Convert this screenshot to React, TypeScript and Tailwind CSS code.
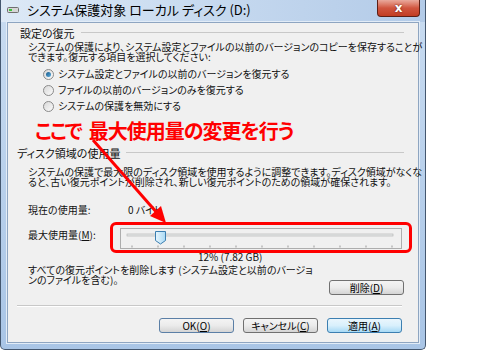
import React from "react";

const jp = "font-['Noto_Sans_CJK_JP','Noto_Sans',sans-serif] [font-feature-settings:'palt']";

function Radio({ checked }: { checked?: boolean }) {
  return (
    <span className="w-[11px] h-[11px] rounded-full border border-[#8a8a8a] bg-gradient-to-br from-[#d8d8d8] to-[#fbfbfb] flex items-center justify-center shrink-0">
      {checked && (
        <span className="w-[5px] h-[5px] rounded-full bg-gradient-to-br from-[#1a5a8a] to-[#5aaee0]" />
      )}
    </span>
  );
}

function WinButton({
  label,
  hot,
  primary,
}: {
  label: React.ReactNode;
  hot?: boolean;
  primary?: boolean;
}) {
  return (
    <div
      className={`w-[75px] h-[15px] rounded-[3px] border flex items-center justify-center text-[10px] leading-[10px] text-black ${
        hot
          ? "border-[#3c7fb1] bg-gradient-to-b from-[#eaf6fd] via-[#d9f0fc] to-[#a7d9f5]"
          : primary
          ? "border-[#5b7fa6] bg-gradient-to-b from-[#f4f4f4] via-[#ebebeb] to-[#d4d4d4]"
          : "border-[#707070] bg-gradient-to-b from-[#f4f4f4] via-[#ebebeb] to-[#d4d4d4]"
      }`}
    >
      {label}
    </div>
  );
}

function GroupHeading({ text, indent }: { text: string; indent: string }) {
  return (
    <div className={`flex items-center gap-[6px] pr-[14px] ${indent}`}>
      <span className="text-[11px] leading-[12px] whitespace-nowrap">{text}</span>
      <span className="flex-1 h-[2px] border-t border-[#c8c8c8] border-b-white" />
    </div>
  );
}

function Slider() {
  const ticks = Array.from({ length: 11 }, (_, i) => 12 + i * 26);
  return (
    <svg width="282" height="21" viewBox="0 0 282 21" className="block">
      <rect x="0.5" y="0.5" width="281" height="20" fill="none" stroke="#6a6a6a" strokeDasharray="1 1" />
      <rect x="7" y="6" width="266" height="2" fill="#e7eaea" stroke="#b0b0b0" strokeWidth="0.6" />
      {ticks.map((x) => (
        <line key={x} x1={x} y1="17.5" x2={x} y2="19.5" stroke="#9a9a9a" />
      ))}
      <defs>
        <linearGradient id="thumb" x1="0" y1="0" x2="1" y2="0">
          <stop offset="0" stopColor="#e8f6fd" />
          <stop offset="1" stopColor="#a9d9f4" />
        </linearGradient>
      </defs>
      <path d="M35.5 3.5 h10 v9 l-5 3.5 l-5 -3.5 z" fill="url(#thumb)" stroke="#3c7fb1" strokeLinejoin="round" />
    </svg>
  );
}

export default function App() {
  return (
    <div className={`w-[500px] h-[350px] bg-white relative overflow-hidden ${jp} text-[#111]`}>
      <div className="w-[426px] h-[350px] flex flex-col border-x border-b border-[#44576f] rounded-b-[5px] bg-gradient-to-b from-[#c9dcf1] to-[#a9c5e6]">
        {/* title bar */}
        <div className="h-[22px] flex items-start bg-gradient-to-r from-[#dde9f6] via-[#c6d9ef] to-[#b3cbe8]">
          <div className="flex items-center h-[22px] pl-[6px] gap-[8px] pb-[3px]">
            <svg width="12" height="6" viewBox="0 0 12 6">
              <rect x="0.5" y="0.5" width="11" height="5" rx="1" fill="#d6d6d6" stroke="#6f6f6f" />
              <rect x="2" y="2" width="3" height="2" fill="#3ec43e" />
            </svg>
            <span className="text-[13px] leading-[14px] text-black whitespace-nowrap">
              システム保護対象 ローカル ディスク (D:)
            </span>
          </div>
          <div className="ml-auto mr-[5px] w-[43px] h-[17px] rounded-b-[4px] border border-t-0 border-[#5d1f15] bg-gradient-to-b from-[#e9a99c] via-[#d0553f] to-[#c23d22] flex items-center justify-center">
            <span className="text-white text-[12px] font-bold leading-[12px] font-['DejaVu_Sans',sans-serif] [text-shadow:0_0_2px_#5a1208]">x</span>
          </div>
        </div>

        {/* client panel */}
        <div className="mx-[6px] mb-[6px] flex-1 bg-[#f0f0f0] border border-[#8ea5c1] shadow-[0_0_0_1px_#e2ecf7] flex flex-col">
          <div className="h-[19px] flex items-center">
            <div className="flex-1">
              <GroupHeading text="設定の復元" indent="pl-[12px]" />
            </div>
          </div>
          <p className="pl-[20px] text-[10px] leading-[10px] whitespace-nowrap">
            システムの保護により、システム設定とファイルの以前のバージョンのコピーを保存することが
            <br />
            できます。復元する項目を選択してください:
          </p>
          <div className="mt-[4px] pl-[35px] text-[10px] leading-[10px]">
            <div className="h-[16px] flex items-center gap-[4px]">
              <Radio checked />
              <span>システム設定とファイルの以前のバージョンを復元する</span>
            </div>
            <div className="h-[16px] flex items-center gap-[4px]">
              <Radio />
              <span>ファイルの以前のバージョンのみを復元する</span>
            </div>
            <div className="h-[16px] flex items-center gap-[4px]">
              <Radio />
              <span>システムの保護を無効にする</span>
            </div>
          </div>

          <div className="mt-[4px] h-[26px] pl-[27px] flex items-center gap-[8px] text-[20px] leading-[22px] font-bold text-[#ff0000] whitespace-nowrap">
            <span className="tracking-[-2px]">ここで</span>
            <span className="tracking-[-1px]">最大使用量の変更を行う</span>
          </div>

          <div className="h-[18px] flex items-center">
            <div className="flex-1">
              <GroupHeading text="ディスク領域の使用量" indent="pl-[9px]" />
            </div>
          </div>
          <p className="mt-[5px] pl-[20px] text-[10px] leading-[10px] whitespace-nowrap">
            システムの保護で最大限のディスク領域を使用するように調整できます。ディスク領域がなくな
            <br />
            ると、古い復元ポイントが削除され、新しい復元ポイントのための領域が確保されます。
          </p>

          <div className="mt-[16px] h-[14px] pl-[20px] flex items-center text-[10px] leading-[10px]">
            <span className="w-[100px]">現在の使用量:</span>
            <span>0 バイト</span>
          </div>

          <div className="mt-[5px] h-[31px] flex items-start">
            <div className="w-[112px] pl-[20px] mt-[8px] text-[10px] leading-[10px] whitespace-nowrap">
              最大使用量(<span className="underline">M</span>):
            </div>
            <div className="relative mt-[6px]">
              <Slider />
              <div className="absolute left-[-10px] right-[-10px] top-[-6px] bottom-[-4px] border-[3px] border-[#ff0000] rounded-[6px]" />
            </div>
          </div>

          <div className="mt-[-1px] h-[10px] pl-[190px] text-[10px] leading-[10px]">12% (7.82 GB)</div>

          <div className="mt-[2px] flex items-start justify-between pr-[14px]">
            <p className="pl-[20px] pt-[1px] text-[10px] leading-[10px] whitespace-nowrap">
              すべての復元ポイントを削除します (システム設定と以前のバージョ
              <br />
              ンのファイルを含む)。
            </p>
            <div className="mt-[16px]">
              <WinButton
                label={
                  <>
                    削除(<span className="underline">D</span>)
                  </>
                }
              />
            </div>
          </div>

          <div className="mt-[10px] ml-[9px] mr-[16px] h-[2px] border-t border-[#c8c8c8] border-b border-b-white" />

          <div className="mt-[11px] flex justify-end gap-[9px] pr-[16px]">
            <WinButton
              primary
              label={
                <>
                  OK(<span className="underline">O</span>)
                </>
              }
            />
            <WinButton
              label={
                <>
                  キャンセル(<span className="underline">C</span>)
                </>
              }
            />
            <WinButton
              hot
              label={
                <>
                  適用(<span className="underline">A</span>)
                </>
              }
            />
          </div>
        </div>
      </div>

      {/* annotation arrow */}
      <svg className="absolute left-0 top-0 pointer-events-none" width="500" height="350" viewBox="0 0 500 350">
        <line x1="93" y1="140" x2="158" y2="214" stroke="#ff0000" strokeWidth="3" />
        <polygon points="166,223 150,216 161,206" fill="#ff0000" />
      </svg>
    </div>
  );
}
